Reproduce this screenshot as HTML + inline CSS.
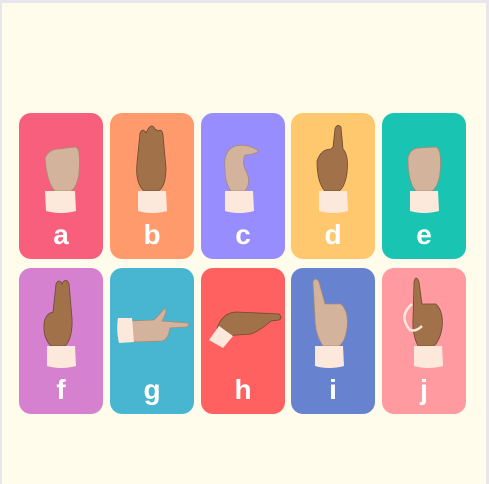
<!DOCTYPE html>
<html><head><style>
html,body{margin:0;padding:0;width:489px;height:484px;background:#e6e6ec;overflow:hidden}
#p{position:absolute;left:2px;top:3px;width:484px;height:481px;background:#fffcec}
.c{position:absolute;width:84px;height:146px;border-radius:12px;overflow:hidden}
.c span{position:absolute;left:0;right:0;top:106px;text-align:center;color:#fff;font:bold 28px "Liberation Sans",sans-serif}
.c svg{position:absolute;left:0;top:0}
</style></head><body><div id="p"></div>
<div class="c" style="left:19px;top:113px;background:#f75f7d"><svg width="84" height="146"><path d="M26 45 Q30 36 40 36 L56 34 Q62 34 60 60 Q58 74 52 78 L36 78 Q28 70 26 45Z" fill="#d3b39c" stroke="#a98a74" stroke-width=".8"/><path d="M26 78 L56 78 L57 98 Q42 102 27 98Z" fill="#fde9dc"/></svg><span>a</span></div>
<div class="c" style="left:110px;top:113px;background:#ff9a6c"><svg width="84" height="146"><path d="M27 50 L30 20 Q33 14 36 20 L38 16 Q42 10 45 16 L48 18 Q52 15 53 22 L56 55 Q56 74 48 78 L34 78 Q25 70 27 50Z" fill="#a1714a" stroke="#6a4a30" stroke-width=".8"/><path d="M28 78 L56 78 L57 98 Q42 102 28 98Z" fill="#fde9dc"/></svg><span>b</span></div>
<div class="c" style="left:201px;top:113px;background:#978dff"><svg width="84" height="146"><path d="M24 55 Q22 38 34 33 Q46 30 58 38 Q52 42 44 42 Q40 50 46 60 Q50 70 44 78 L30 78 Q24 70 24 55Z" fill="#d3b39c" stroke="#a98a74" stroke-width=".8"/><path d="M24 78 L52 78 L53 98 Q38 102 24 98Z" fill="#fde9dc"/></svg><span>c</span></div>
<div class="c" style="left:291px;top:113px;background:#ffc86f"><svg width="84" height="146"><path d="M26 48 Q30 36 40 36 L42 34 L44 16 Q46 10 50 14 L52 36 Q58 42 56 60 Q54 74 48 78 L34 78 Q26 70 26 48Z" fill="#a1714a" stroke="#6a4a30" stroke-width=".8"/><path d="M28 78 L56 78 L57 98 Q42 102 28 98Z" fill="#fde9dc"/></svg><span>d</span></div>
<div class="c" style="left:382px;top:113px;background:#1ac4b2"><svg width="84" height="146"><path d="M26 45 Q28 36 36 35 L54 34 Q60 36 58 60 Q56 74 50 78 L34 78 Q26 70 26 45Z" fill="#d3b39c" stroke="#a98a74" stroke-width=".8"/><path d="M28 78 L56 78 L57 98 Q42 102 28 98Z" fill="#fde9dc"/></svg><span>e</span></div>
<div class="c" style="left:19px;top:268px;background:#d680d0"><svg width="84" height="146"><path d="M25 56 Q26 46 34 44 L37 16 Q40 10 43 16 L44 14 Q48 10 50 16 L53 50 Q54 70 46 78 L32 78 Q24 70 25 56Z" fill="#a1714a" stroke="#6a4a30" stroke-width=".8"/><path d="M28 78 L56 78 L57 98 Q42 102 28 98Z" fill="#fde9dc"/></svg><span>f</span></div>
<div class="c" style="left:110px;top:268px;background:#48b6d0"><svg width="84" height="146"><path d="M20 53 L44 52 Q50 46 55 40 Q58 42 52 53 L78 55 Q80 58 76 59 L60 60 Q58 72 52 73 L24 74Z" fill="#d3b39c" stroke="#a98a74" stroke-width=".8"/><path d="M8 50 L22 50 L24 74 L9 75 Q6 62 8 50Z" fill="#fde9dc"/></svg><span>g</span></div>
<div class="c" style="left:201px;top:268px;background:#ff6060"><svg width="84" height="146"><path d="M16 60 Q22 44 36 44 L78 46 Q82 50 78 52 L70 53 Q60 62 50 66 L22 68Z" fill="#a1714a" stroke="#6a4a30" stroke-width=".8"/><path d="M8 72 L18 58 L32 68 L22 80Z" fill="#fde9dc"/></svg><span>h</span></div>
<div class="c" style="left:291px;top:268px;background:#6783d0"><svg width="84" height="146"><path d="M22 14 Q24 8 28 14 L34 36 L50 36 Q58 44 56 60 Q54 74 48 78 L32 78 Q24 66 24 50Z" fill="#d3b39c" stroke="#a98a74" stroke-width=".8"/><path d="M24 78 L52 78 L53 98 Q38 102 24 98Z" fill="#fde9dc"/></svg><span>i</span></div>
<div class="c" style="left:382px;top:268px;background:#ff9aa0"><svg width="84" height="146"><path d="M32 14 Q34 6 37 14 L40 36 L54 36 Q62 44 60 60 Q58 72 52 78 L36 78 Q30 66 31 50Z" fill="#a1714a" stroke="#6a4a30" stroke-width=".8"/><path d="M30 36 Q16 48 28 62 Q34 64 40 58" fill="none" stroke="#fde9dc" stroke-width="2.5"/><path d="M32 78 L60 78 L61 98 Q46 102 32 98Z" fill="#fde9dc"/></svg><span>j</span></div>
</body></html>
